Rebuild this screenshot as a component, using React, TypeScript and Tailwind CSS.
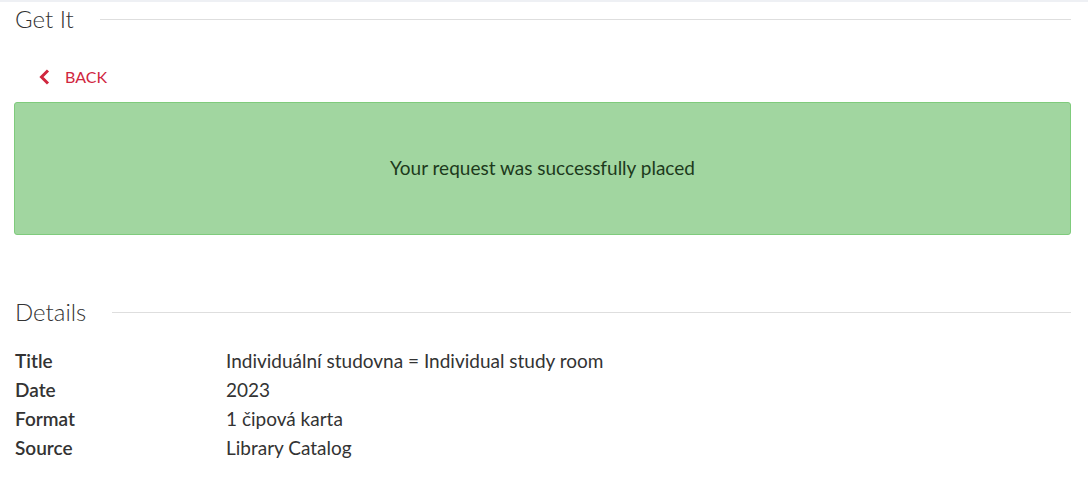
import React from 'react';

const FONT = { fontFamily: '"Source Sans Pro", Lato, "Noto Sans", sans-serif' };

const details: [string, string][] = [
  ['Title', 'Individuální studovna = Individual study room'],
  ['Date', '2023'],
  ['Format', '1 čipová karta'],
  ['Source', 'Library Catalog'],
];

const SectionHeading = ({ children }: { children: React.ReactNode }) => (
  <div className="flex items-center gap-[26px]">
    <h2 className="text-[24px] font-light leading-[36px] text-[#333]">{children}</h2>
    <div className="h-px flex-1 bg-[#dedede]" />
  </div>
);

export default function App() {
  return (
    <div className="min-h-[490px] w-[1088px] bg-white text-[#333]" style={FONT}>
      <div className="h-[2px] bg-[#eef0f4]" />
      <div className="pl-[15px] pr-[17px]">
        <div className="-mt-[1px]">
          <SectionHeading>Get It</SectionHeading>
        </div>

        <div className="mt-[29px] flex items-center pl-[23px] text-[16px] text-[#d0263e]">
          <svg width="12" height="18" viewBox="0 0 12 18" className="mr-[15px]">
            <path d="M10 2.5 L3.5 9 L10 15.5" fill="none" stroke="currentColor" strokeWidth="3" />
          </svg>
          <span className="leading-[22px]">BACK</span>
        </div>

        <div className="-ml-px mt-[14px] flex h-[133px] items-center justify-center rounded-[3px] border border-[#7fcb7c] bg-[#a1d6a0] text-[19px] text-[#1d3a1c]">
          Your request was successfully placed
        </div>

        <div className="mt-[59px]">
          <SectionHeading>Details</SectionHeading>
        </div>

        <div className="mt-[16px] grid grid-cols-[211px_1fr] text-[19px] leading-[29px]">
          {details.map(([label, value]) => (
            <React.Fragment key={label}>
              <div className="font-semibold">{label}</div>
              <div>{value}</div>
            </React.Fragment>
          ))}
        </div>
      </div>
    </div>
  );
}
